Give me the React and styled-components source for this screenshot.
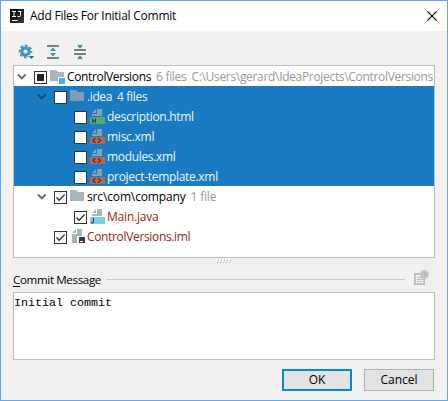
import React from "react";
import styled, { createGlobalStyle, css } from "styled-components";

const GlobalStyle = createGlobalStyle`
  * { box-sizing: border-box; }
  body { margin: 0; }
`;

const Dialog = styled.div`
  width: 448px;
  height: 401px;
  display: flex;
  flex-direction: column;
  background: #f1f1f1;
  border: 1px solid #5faaf2;
  font: 12px/20px "Open Sans", "Noto Sans", sans-serif;
  color: #000;
`;

const TitleBar = styled.header`
  height: 30px;
  flex: none;
  display: flex;
  align-items: center;
  padding: 0 10px 0 9px;
  background: #fff;
`;

const Title = styled.h1`
  flex: 1;
  margin: 0 0 0 6px;
  font-size: 12px;
  font-weight: 400;
  letter-spacing: ${(p) => p.$spacing}px;
  white-space: pre;
`;

const CloseButton = styled.button`
  display: flex;
  padding: 0;
  border: 0;
  background: none;
`;

const Toolbar = styled.div`
  height: 34px;
  flex: none;
  display: flex;
  align-items: flex-start;
  gap: 11px;
  padding: 13px 0 0 17px;
`;

const Tree = styled.div`
  height: 193px;
  flex: none;
  margin: 0 12px;
  border: 1px solid #bdbdbd;
  background: #fff;
`;

const Row = styled.div`
  height: 20px;
  display: flex;
  align-items: center;
  padding-left: ${(p) => 2 + p.$depth * 20}px;
  ${(p) =>
    p.$selected &&
    css`
      background: #1a7bc3;
    `}
`;

const ChevronSlot = styled.span`
  width: 18px;
  height: 20px;
  flex: none;
`;

const CheckBox = styled.span`
  width: 13px;
  height: 13px;
  flex: none;
  margin-top: 3px;
  display: grid;
  place-items: center;
  border: 1px solid #333;
  background: #fff;
`;

const Mixed = styled.span`
  width: 7px;
  height: 7px;
  background: #222;
`;

const IconSlot = styled.span`
  width: 16px;
  height: 20px;
  flex: none;
  margin: 0 1px 0 3px;
  display: flex;
  align-items: center;
`;

const Label = styled.span`
  flex: none;
  margin-top: 2px;
  color: ${(p) => p.$color};
  letter-spacing: ${(p) => p.$spacing}px;
  white-space: pre;
`;

const Note = styled(Label)`
  margin-left: 5px;
`;

const Splitter = styled.div`
  height: 11px;
  flex: none;
  display: flex;
  justify-content: center;
  padding-top: 2px;
`;

const SectionHeader = styled.div`
  height: 23px;
  flex: none;
  display: flex;
  align-items: flex-start;
  padding: 1px 18px 0 12px;
`;

const SectionTitle = styled.label`
  width: 93px;
  font-size: 11.6px;
  white-space: pre;
  letter-spacing: ${(p) => p.$spacing}px;
  u { text-underline-offset: 2px; text-decoration-skip-ink: none; }
`;

const Rule = styled.span`
  width: 299px;
  height: 1px;
  margin: 9px 8px 0 0;
  background: #c9c9c9;
`;

const Message = styled.div`
  height: 68px;
  flex: none;
  margin: 0 12px;
  border: 1px solid #bdbdbd;
  background: #fff;
  font: 11.67px/20px "Liberation Mono", monospace;
  white-space: pre;
`;

const Footer = styled.footer`
  display: flex;
  justify-content: flex-end;
  gap: 12px;
  padding: 9px 13px 0 0;
`;

const Button = styled.button`
  width: 70px;
  height: 22px;
  padding: 0;
  border: ${(p) => (p.$primary ? "2px solid #0a84dc" : "1px solid #adadad")};
  background: #e2e2e2;
  color: #000;
  font: 12px/18px "Open Sans", "Noto Sans", sans-serif;
`;

const AppIcon = () => (
  <svg width="14" height="14" viewBox="0 0 14 14">
    <defs>
      <linearGradient id="logo" x1="0" y1="0" x2="1" y2="1">
        <stop offset="0" stopColor="#000" />
        <stop offset="1" stopColor="#3a3a3a" />
      </linearGradient>
    </defs>
    <path d="M0 0h14v14H0z" fill="url(#logo)" />
    <path d="M2 2.5h4M4 2.5v5M2 7.5h4M8 2.5h3.5M10.5 2.5v4q0 1-1 1H7.5" fill="none" stroke="#fff" />
    <path d="M2 11h6v1H2z" fill="#fff" />
  </svg>
);

const Gear = () => (
  <svg width="16" height="16" viewBox="0 0 16 16">
    <g fill="none" stroke="#4595c1">
      <circle cx="7.5" cy="7.5" r="3.7" strokeWidth="3.2" />
      <circle cx="7.5" cy="7.5" r="5.8" strokeWidth="2" strokeDasharray="2.6 1.955" strokeDashoffset="1.3" />
    </g>
    <path d="M10 11h6v4h-3z" fill="#f1f1f1" />
    <path d="M11 12h5l-2.5 3z" fill="#555" />
  </svg>
);

const ExpandAll = () => (
  <svg width="16" height="16" viewBox="0 0 16 16">
    <path d="M2 1h12v2H2zM2 13h12v2H2z" fill="#7f7f7f" />
    <path d="M8 3.5l3 3.5H5zM5 9h6l-3 3.5z" fill="#3e8fba" />
  </svg>
);

const CollapseAll = () => (
  <svg width="16" height="16" viewBox="0 0 16 16">
    <path d="M2 5h12v2H2zM2 9h12v2H2z" fill="#7f7f7f" />
    <path d="M5 1h6L8 4.8zM8 11.2l3 3.8H5z" fill="#3e8fba" />
  </svg>
);

const Chevron = ({ selected }) => (
  <svg width="12" height="20" viewBox="0 0 12 20">
    <path d="M2 8.5l3.8 3.8 3.8-3.8" fill="none" stroke={selected ? "#17496f" : "#6b6b6b"} strokeWidth="1.9" />
  </svg>
);

const Check = () => (
  <svg width="11" height="11" viewBox="0 0 11 11">
    <path d="M1.5 5.5l2.6 2.7L9.6 2.5" fill="none" stroke="#333" strokeWidth="1.3" />
  </svg>
);

const FolderIcon = ({ selected, module: isModule }) => (
  <svg width="16" height="16" viewBox="0 0 16 16">
    <path d="M0 2h6l2 2h6v9H0z" fill={selected ? "#7f9db5" : "#a9b4bb"} />
    {isModule && (
      <>
        <path d="M8 9h8v7H8z" fill="#fff" />
        <path d="M9 10h6v6H9z" fill="#45b6e2" />
      </>
    )}
  </svg>
);

const FileIcon = ({ kind, selected }) => {
  const paper = selected ? "#84a3bb" : "#a9b4bb";
  const band = { html: "#56a979", xml: "#b36a50", java: "#7bcbeb" }[kind];
  return (
    <svg width="16" height="16" viewBox="0 0 16 16">
      <path d="M6 1v4H2z" fill={paper} />
      <path d="M7 1h5v7H2V6h5z" fill={paper} />
      <path d="M0 9h15v7H0z" fill={band} />
      {kind === "html" && <path d="M2.6 10.5v4.5M5.4 10.5v4.5M2.6 12.7h2.8" fill="none" stroke="#294f3a" strokeWidth="1.3" />}
      {kind === "xml" && <path d="M5.5 10.3L3 12.5l2.5 2.2M8 10.3l2.5 2.2L8 14.7" fill="none" stroke="#553229" strokeWidth="1.4" />}
      {kind === "java" && <path d="M3.5 10v3.5q0 1.3-1.5 1.3H1" fill="none" stroke="#244c5e" strokeWidth="1.2" />}
    </svg>
  );
};

const ImlIcon = () => (
  <svg width="16" height="16" viewBox="0 0 16 16">
    <path d="M6 1v4H2z" fill="#a9b4bb" />
    <path d="M7 1h5v7H7v7H2V6h5z" fill="#a9b4bb" />
    <path d="M9 9h6v6H9z" fill="#3a3b3d" />
    <path d="M10 13h3v1h-3z" fill="#fff" />
  </svg>
);

const HistoryIcon = () => (
  <svg width="16" height="16" viewBox="0 0 16 16">
    <path d="M1.9 4v10.1h9.2V8M1 4h6" fill="none" stroke="#bcbcbc" strokeWidth="1.8" />
    <path d="M4 7.5h4M4 9.5h6M4 11.5h5" stroke="#bcbcbc" />
    <circle cx="11.3" cy="4.5" r="4.5" fill="#c4c4c4" />
    <path d="M11.3 2v3h3" fill="none" stroke="#b2b2b2" />
  </svg>
);

const CloseIcon = () => (
  <svg width="10" height="10" viewBox="0 0 10 10">
    <path d="M.2.2l9.6 9.6M9.8.2L.2 9.8" stroke="#000" strokeWidth="1.1" />
  </svg>
);

const Grip = () => (
  <svg width="14" height="4" viewBox="0 0 14 4">
    {[0, 3, 6, 9, 12].map((x) => (
      <path key={x} d={`M${x + 1} 0h1v1h-1zM${x} 2h1v1h-1z`} fill="#a5a5a5" />
    ))}
  </svg>
);

const RED = "#9c2410";
const GRAY = "#999999";
const LIGHT = "#eef6fc";

const rows = [
  { depth: 0, open: true, check: "mixed", icon: "module", name: "ControlVersions", color: "#000", note: "6 files", path: "C:\\Users\\gerard\\IdeaProjects\\ControlVersions", s: -0.36, ns: -0.3 },
  { depth: 1, open: true, icon: "folder", name: ".idea", note: "4 files", selected: true, s: -0.4, ns: -0.3 },
  { depth: 2, icon: "html", name: "description.html", selected: true, s: -0.3 },
  { depth: 2, icon: "xml", name: "misc.xml", selected: true, s: -0.25 },
  { depth: 2, icon: "xml", name: "modules.xml", selected: true, s: -0.33 },
  { depth: 2, icon: "xml", name: "project-template.xml", selected: true, s: -0.3 },
  { depth: 1, open: true, check: "on", icon: "folder", name: "src\\com\\company", color: "#000", note: "1 file", s: -0.14 },
  { depth: 2, check: "on", icon: "java", name: "Main.java", color: RED, s: -0.2 },
  { depth: 1, check: "on", icon: "iml", name: "ControlVersions.iml", color: RED, s: -0.34 },
];

const RowIcon = ({ icon, selected }) => {
  if (icon === "module" || icon === "folder") return <FolderIcon module={icon === "module"} selected={selected} />;
  if (icon === "iml") return <ImlIcon />;
  return <FileIcon kind={icon} selected={selected} />;
};

const TreeRow = ({ row }) => (
  <Row $depth={row.depth} $selected={row.selected}>
    <ChevronSlot>{row.open && <Chevron selected={row.selected} />}</ChevronSlot>
    <CheckBox>
      {row.check === "mixed" && <Mixed />}
      {row.check === "on" && <Check />}
    </CheckBox>
    <IconSlot>
      <RowIcon icon={row.icon} selected={row.selected} />
    </IconSlot>
    <Label $color={row.selected ? LIGHT : row.color} $spacing={row.s}>{row.name}</Label>
    {row.note && <Note $color={row.selected ? LIGHT : GRAY} $spacing={row.ns ?? -0.2}>{row.note}</Note>}
    {row.path && <Note $color={GRAY} $spacing={-0.32}>{row.path}</Note>}
  </Row>
);

export default function App() {
  return (
    <>
      <GlobalStyle />
      <Dialog>
        <TitleBar>
          <AppIcon />
          <Title $spacing={-0.24}>Add Files For Initial Commit</Title>
          <CloseButton aria-label="Close"><CloseIcon /></CloseButton>
        </TitleBar>
        <Toolbar>
          <Gear />
          <ExpandAll />
          <CollapseAll />
        </Toolbar>
        <Tree>
          {rows.map((row) => <TreeRow key={row.name} row={row} />)}
        </Tree>
        <Splitter><Grip /></Splitter>
        <SectionHeader>
          <SectionTitle $spacing={-0.36}><u>C</u>ommit Message</SectionTitle>
          <Rule />
          <HistoryIcon />
        </SectionHeader>
        <Message>Initial commit</Message>
        <Footer>
          <Button $primary>OK</Button>
          <Button>Cancel</Button>
        </Footer>
      </Dialog>
    </>
  );
}
